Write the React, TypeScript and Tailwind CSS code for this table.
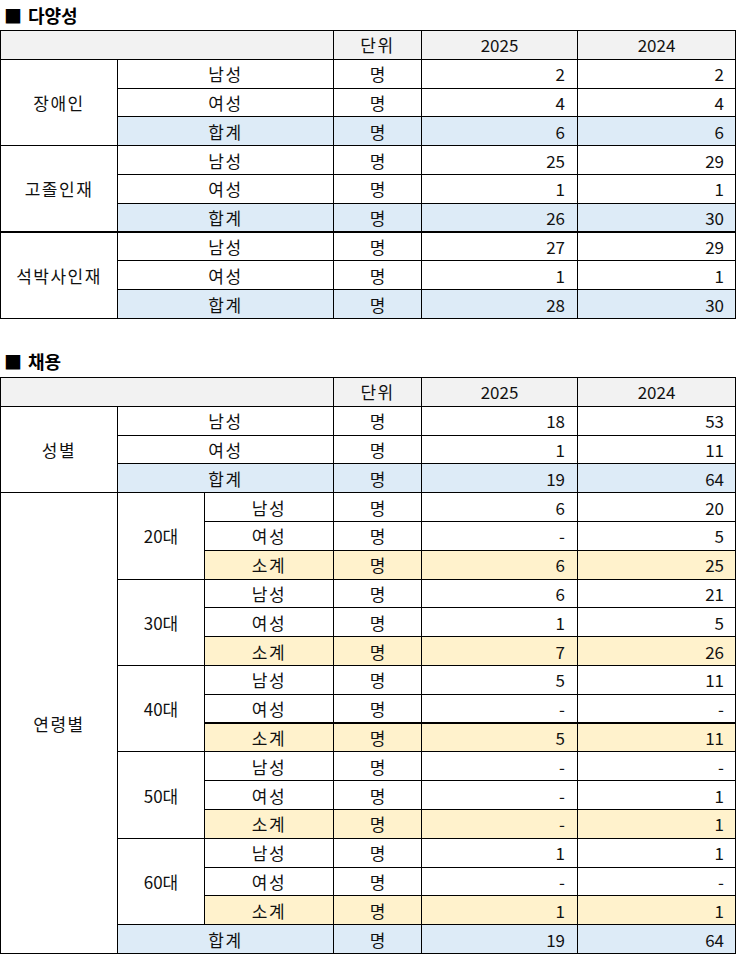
import React from "react";

type Row = { label: string; v1: string; v2: string; kind?: "sum" | "sub"; thickTop?: boolean };

const FONT = { fontFamily: '"Noto Sans CJK KR", "Noto Sans", sans-serif' } as const;

const td = "border border-black h-[28.8px] py-0 text-[17px] leading-none";
const ko = "tracking-[1.5px]";

function bg(kind?: "sum" | "sub") {
  if (kind === "sum") return "bg-[#ddebf7]";
  if (kind === "sub") return "bg-[#fff2cc]";
  return "bg-white";
}

function thick(on?: boolean) {
  return on ? "border-t-2" : "";
}

function Title({ text }: { text: string }) {
  return (
    <div className="h-[30px] flex items-center pl-[4px] text-[18px] font-bold text-black">
      <span className="text-[18px] mr-[6px]">■</span>
      {text}
    </div>
  );
}

function Header({ span }: { span: number }) {
  return (
    <tr>
      <td colSpan={span} className={`${td} px-0 bg-[#f2f2f2]`}></td>
      <td className={`${td} ${ko} px-0 bg-[#f2f2f2] text-center`}>단위</td>
      <td className={`${td} px-0 bg-[#f2f2f2] text-center`}>2025</td>
      <td className={`${td} px-0 bg-[#f2f2f2] text-center`}>2024</td>
    </tr>
  );
}

function Values({ r }: { r: Row }) {
  const t = thick(r.thickTop);
  return (
    <>
      <td className={`${td} px-0 ${bg(r.kind)} text-center ${t}`}>명</td>
      <td className={`${td} pl-0 pr-[12px] ${bg(r.kind)} text-right ${t}`}>{r.v1}</td>
      <td className={`${td} pl-0 pr-[11px] ${bg(r.kind)} text-right ${t}`}>{r.v2}</td>
    </>
  );
}

const diversity: { group: string; rows: Row[]; thick?: boolean }[] = [
  {
    group: "장애인",
    rows: [
      { label: "남성", v1: "2", v2: "2" },
      { label: "여성", v1: "4", v2: "4" },
      { label: "합계", v1: "6", v2: "6", kind: "sum" },
    ],
  },
  {
    group: "고졸인재",
    rows: [
      { label: "남성", v1: "25", v2: "29" },
      { label: "여성", v1: "1", v2: "1" },
      { label: "합계", v1: "26", v2: "30", kind: "sum" },
    ],
  },
  {
    group: "석박사인재",
    thick: true,
    rows: [
      { label: "남성", v1: "27", v2: "29", thickTop: true },
      { label: "여성", v1: "1", v2: "1" },
      { label: "합계", v1: "28", v2: "30", kind: "sum" },
    ],
  },
];

const ages: { group: string; rows: Row[] }[] = [
  {
    group: "20대",
    rows: [
      { label: "남성", v1: "6", v2: "20" },
      { label: "여성", v1: "-", v2: "5" },
      { label: "소계", v1: "6", v2: "25", kind: "sub" },
    ],
  },
  {
    group: "30대",
    rows: [
      { label: "남성", v1: "6", v2: "21" },
      { label: "여성", v1: "1", v2: "5" },
      { label: "소계", v1: "7", v2: "26", kind: "sub" },
    ],
  },
  {
    group: "40대",
    rows: [
      { label: "남성", v1: "5", v2: "11" },
      { label: "여성", v1: "-", v2: "-" },
      { label: "소계", v1: "5", v2: "11", kind: "sub", thickTop: true },
    ],
  },
  {
    group: "50대",
    rows: [
      { label: "남성", v1: "-", v2: "-" },
      { label: "여성", v1: "-", v2: "1" },
      { label: "소계", v1: "-", v2: "1", kind: "sub" },
    ],
  },
  {
    group: "60대",
    rows: [
      { label: "남성", v1: "1", v2: "1" },
      { label: "여성", v1: "-", v2: "-" },
      { label: "소계", v1: "1", v2: "1", kind: "sub" },
    ],
  },
];

const gender: Row[] = [
  { label: "남성", v1: "18", v2: "53" },
  { label: "여성", v1: "1", v2: "11" },
  { label: "합계", v1: "19", v2: "64", kind: "sum" },
];

export default function App() {
  return (
    <div className="w-[736px] bg-white text-[#111]" style={FONT}>
      <Title text="다양성" />
      <table className="border-collapse table-fixed w-[735px]">
        <colgroup>
          <col className="w-[117px]" />
          <col className="w-[216px]" />
          <col className="w-[88px]" />
          <col className="w-[156px]" />
          <col className="w-[158px]" />
        </colgroup>
        <tbody>
          <Header span={2} />
          {diversity.map((g) =>
            g.rows.map((r, i) => (
              <tr key={g.group + i}>
                {i === 0 && (
                  <td rowSpan={3} className={`${td} ${ko} px-0 bg-white text-center ${thick(g.thick)}`}>
                    {g.group}
                  </td>
                )}
                <td className={`${td} ${ko} px-0 ${bg(r.kind)} text-center ${thick(r.thickTop)}`}>{r.label}</td>
                <Values r={r} />
              </tr>
            ))
          )}
        </tbody>
      </table>

      <div className="h-[28px]" />
      <Title text="채용" />
      <table className="border-collapse table-fixed w-[735px]">
        <colgroup>
          <col className="w-[117px]" />
          <col className="w-[87px]" />
          <col className="w-[129px]" />
          <col className="w-[88px]" />
          <col className="w-[156px]" />
          <col className="w-[158px]" />
        </colgroup>
        <tbody>
          <Header span={3} />
          {gender.map((r, i) => (
            <tr key={"g" + i}>
              {i === 0 && (
                <td rowSpan={3} className={`${td} ${ko} px-0 bg-white text-center`}>
                  성별
                </td>
              )}
              <td colSpan={2} className={`${td} ${ko} px-0 ${bg(r.kind)} text-center`}>
                {r.label}
              </td>
              <Values r={r} />
            </tr>
          ))}
          {ages.map((g, gi) =>
            g.rows.map((r, i) => (
              <tr key={g.group + i}>
                {gi === 0 && i === 0 && (
                  <td rowSpan={16} className={`${td} ${ko} px-0 bg-white text-center`}>
                    연령별
                  </td>
                )}
                {i === 0 && (
                  <td rowSpan={3} className={`${td} px-0 bg-white text-center`}>
                    {g.group}
                  </td>
                )}
                <td className={`${td} ${ko} px-0 ${bg(r.kind)} text-center ${thick(r.thickTop)}`}>{r.label}</td>
                <Values r={r} />
              </tr>
            ))
          )}
          <tr>
            <td colSpan={2} className={`${td} ${ko} px-0 bg-[#ddebf7] text-center`}>
              합계
            </td>
            <Values r={{ label: "합계", v1: "19", v2: "64", kind: "sum" }} />
          </tr>
        </tbody>
      </table>
    </div>
  );
}
